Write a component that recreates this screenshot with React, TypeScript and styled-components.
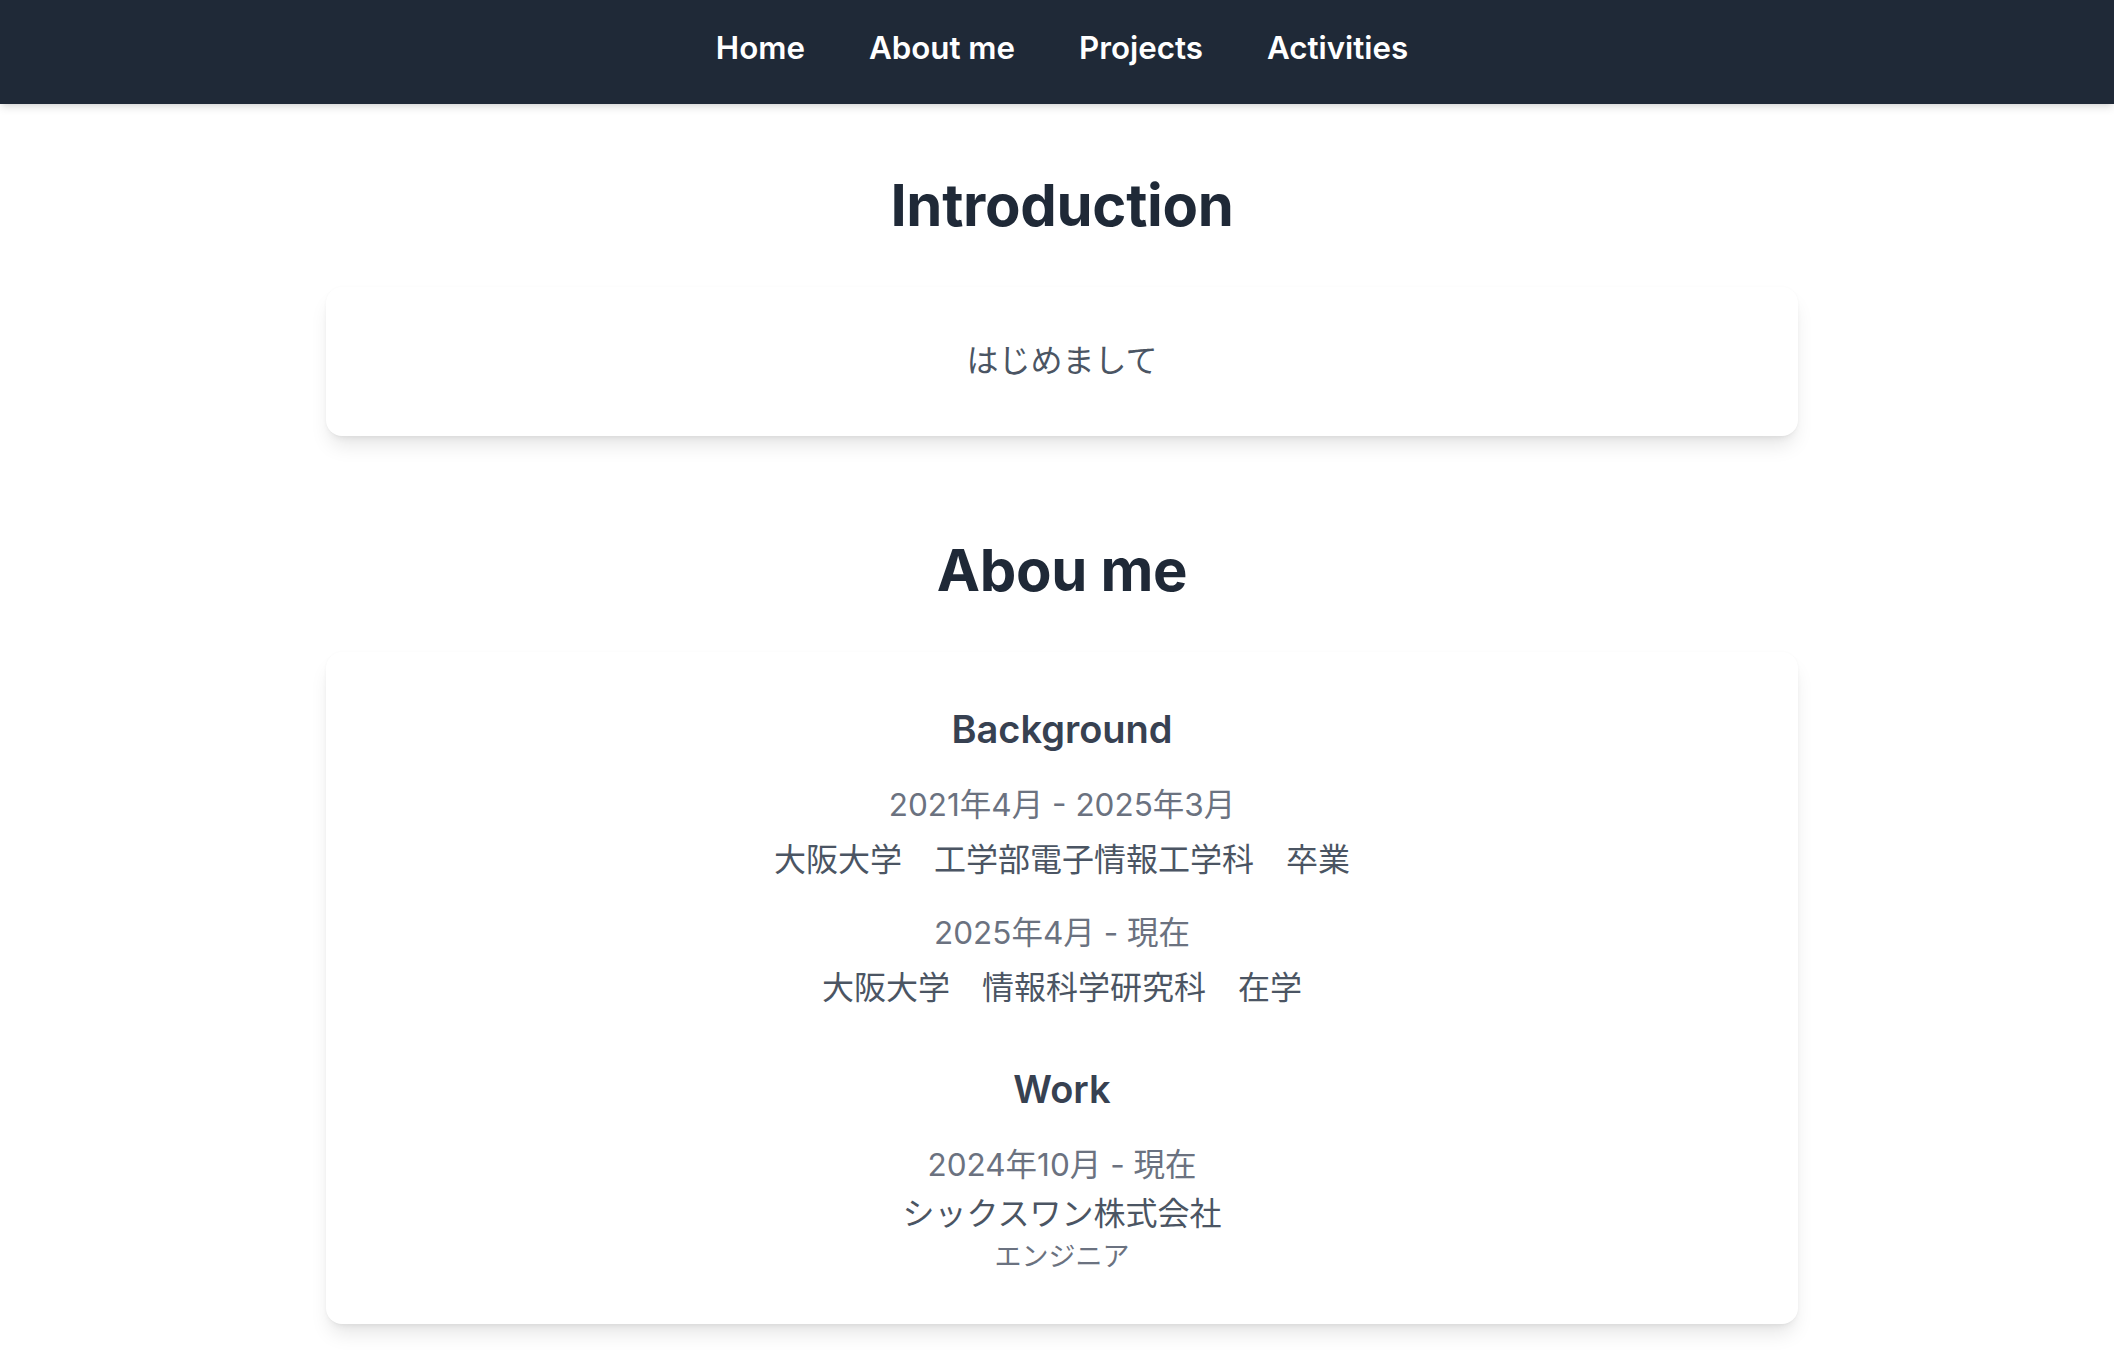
import React from "react";
import styled, { createGlobalStyle } from "styled-components";

const GlobalStyle = createGlobalStyle`
  html, body {
    margin: 0;
    padding: 0;
    background: #ffffff;
  }
  body {
    font-family: Inter, "Noto Sans CJK JP", "Noto Sans", sans-serif;
    -webkit-font-smoothing: antialiased;
  }
  * { box-sizing: border-box; }
`;

const NavBar = styled.nav`
  background: #1f2937;
  height: 104px;
  box-shadow: 0 5px 8px -1px rgba(0, 0, 0, 0.1), 0 3px 5px -3px rgba(0, 0, 0, 0.1);
  position: relative;
  z-index: 1;
`;

const NavList = styled.ul`
  list-style: none;
  margin: 0;
  padding: 27px 0 0 10px;
  display: flex;
  justify-content: center;
  gap: 64px;
`;

const NavLink = styled.a`
  display: block;
  color: #ffffff;
  font-family: Inter, "Noto Sans CJK JP", sans-serif;
  font-size: 31.3px;
  font-weight: 600;
  line-height: 43px;
  text-decoration: none;
`;

const Main = styled.main`
  padding: 66px 0 40px 10px;
  display: flex;
  flex-direction: column;
  align-items: center;
`;

const Section = styled.section<{ $top?: number }>`
  width: 1472px;
  margin-top: ${(p) => p.$top ?? 0}px;
  display: flex;
  flex-direction: column;
  align-items: stretch;
`;

const Heading = styled.h2`
  margin: 0 0 47px;
  text-align: center;
  color: #1f2937;
  font-family: Inter, "Noto Sans CJK JP", sans-serif;
  font-size: 58px;
  font-weight: 700;
  line-height: 70px;
  letter-spacing: -0.3px;
`;

const Card = styled.div<{ $pad: string }>`
  background: #ffffff;
  border-radius: 16px;
  padding: ${(p) => p.$pad};
  box-shadow: 0 13px 20px -4px rgba(0, 0, 0, 0.1), 0 5px 8px -5px rgba(0, 0, 0, 0.1),
    0 0 3px rgba(0, 0, 0, 0.03);
  text-align: center;
`;

const Lead = styled.p`
  margin: 0;
  color: #4b5563;
  font-size: 32px;
  line-height: 44px;
  font-weight: 400;
`;

const SubHeading = styled.h3<{ $top?: number }>`
  margin: ${(p) => p.$top ?? 0}px 0 30px;
  color: #374151;
  font-size: 38px;
  font-weight: 600;
  line-height: 48px;
`;

const EntryList = styled.div`
  display: flex;
  flex-direction: column;
  gap: 29px;
`;

const Entry = styled.div`
  display: flex;
  flex-direction: column;
`;

const DateText = styled.p<{ $gap: number }>`
  margin: 0 0 ${(p) => p.$gap}px;
  color: #6b7280;
  font-size: 31.5px;
  line-height: 44px;
`;

const Place = styled.p`
  margin: 0;
  color: #4b5563;
  font-size: 32px;
  line-height: 44px;
  white-space: pre;
`;

const Role = styled.p`
  margin: 3px 0 0;
  color: #6b7280;
  font-size: 27px;
  line-height: 36px;
`;

const navItems = ["Home", "About me", "Projects", "Activities"];

export default function App() {
  return (
    <>
      <GlobalStyle />
      <NavBar>
        <NavList>
          {navItems.map((item) => (
            <li key={item}>
              <NavLink href="#">{item}</NavLink>
            </li>
          ))}
        </NavList>
      </NavBar>
      <Main>
        <Section>
          <Heading>Introduction</Heading>
          <Card $pad="52px 40px 53px">
            <Lead>はじめまして</Lead>
          </Card>
        </Section>
        <Section $top={99}>
          <Heading>Abou me</Heading>
          <Card $pad="53px 40px 49px">
            <SubHeading>Background</SubHeading>
            <EntryList>
              <Entry>
                <DateText $gap={11}>2021年4月 - 2025年3月</DateText>
                <Place>大阪大学　工学部電子情報工学科　卒業</Place>
              </Entry>
              <Entry>
                <DateText $gap={11}>2025年4月 - 現在</DateText>
                <Place>大阪大学　情報科学研究科　在学</Place>
              </Entry>
            </EntryList>
            <SubHeading $top={55}>Work</SubHeading>
            <Entry>
              <DateText $gap={5}>2024年10月 - 現在</DateText>
              <Place>シックスワン株式会社</Place>
              <Role>エンジニア</Role>
            </Entry>
          </Card>
        </Section>
      </Main>
    </>
  );
}
